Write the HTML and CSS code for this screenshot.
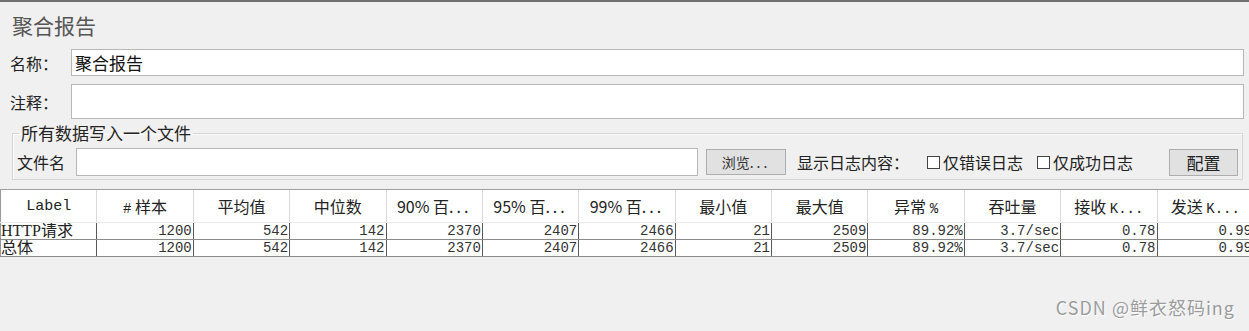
FILE: index.html
```html
<!DOCTYPE html>
<html lang="zh-CN">
<head>
    <meta charset="UTF-8">
    <meta name="viewport" content="width=device-width, initial-scale=1.0">
    <title>聚合报告</title>
    <link rel="stylesheet" href="styles.css">
</head>
<body>

<div class="title">聚合报告</div>

<div class="field-row name-row">
    <label class="field-label">名称：</label>
    <input class="text-input" type="text" value="聚合报告">
</div>
<div class="field-row comment-row">
    <label class="field-label">注释：</label>
    <input class="text-input" type="text" value="">
</div>

<fieldset class="file-box">
    <legend>所有数据写入一个文件</legend>
    <div class="file-row">
        <span class="file-label">文件名</span>
        <input class="file-input" type="text" value="">
        <button class="btn browse-btn">浏览<span class="dots">...</span></button>
        <span class="log-label">显示日志内容：</span>
        <label class="check"><span class="box"></span>仅错误日志</label>
        <label class="check"><span class="box"></span>仅成功日志</label>
        <button class="btn config-btn">配置</button>
    </div>
</fieldset>

<div class="table-wrap">
    <table class="report">
        <thead>
            <tr>
                <th class="mono">Label</th>
                <th><span class="mono">#</span> 样本</th>
                <th>平均值</th>
                <th>中位数</th>
                <th>90% 百<span class="dots">...</span></th>
                <th>95% 百<span class="dots">...</span></th>
                <th>99% 百<span class="dots">...</span></th>
                <th>最小值</th>
                <th>最大值</th>
                <th>异常 <span class="mono">%</span></th>
                <th>吞吐量</th>
                <th>接收 <span class="mono">K...</span></th>
                <th>发送 <span class="mono">K...</span></th>
            </tr>
        </thead>
        <tbody>
            <tr>
                <td class="label-cell">HTTP请求</td>
                <td>1200</td><td>542</td><td>142</td><td>2370</td><td>2407</td><td>2466</td>
                <td>21</td><td>2509</td><td>89.92%</td><td>3.7/sec</td><td>0.78</td><td>0.99</td>
            </tr>
            <tr>
                <td class="label-cell">总体</td>
                <td>1200</td><td>542</td><td>142</td><td>2370</td><td>2407</td><td>2466</td>
                <td>21</td><td>2509</td><td>89.92%</td><td>3.7/sec</td><td>0.78</td><td>0.99</td>
            </tr>
        </tbody>
    </table>
</div>

<div class="watermark">CSDN @鲜衣怒码ing</div>

</body>
</html>
```

FILE: styles.css
```css
body {
    margin: 0;
    height: 329px;
    position: relative;
    overflow: hidden;
    background-color: #f0f0f0;
    border-top: 2px solid #707070;
    font-family: "Noto Sans CJK SC", sans-serif;
    color: #222;
}
.title {
    height: 47px;
    line-height: 47px;
    padding-left: 12px;
    font-size: 21px;
    color: #555;
}
.field-row {
    display: flex;
    align-items: center;
    padding: 0 5px 0 10px;
}
.name-row {
    height: 27px;
}
.comment-row {
    height: 35px;
    margin-top: 8px;
}
.field-label {
    width: 61px;
    font-size: 16px;
}
.text-input {
    flex: 1;
    height: 100%;
    margin: 0;
    padding: 0 3px;
    box-sizing: border-box;
    border: 1px solid #b7b7b7;
    background-color: #fff;
    font-family: "Noto Sans CJK SC", sans-serif;
    font-size: 17px;
    color: #111;
    outline: none;
}
.file-box {
    margin: 4px 6px 0 12px;
    padding: 5px 4px 3px 4px;
    border: 1px solid #d6d6d6;
    box-shadow: inset 1px 1px 0 #fafafa;
}
.file-box legend {
    margin-left: 2px;
    padding: 0 2px;
    font-size: 17px;
    line-height: 20px;
    color: #222;
}
.file-row {
    display: flex;
    align-items: center;
    height: 28px;
}
.file-label {
    width: 50px;
    font-size: 16px;
}
.file-input {
    width: 622px;
    height: 28px;
    margin: 0 0 0 9px;
    padding: 0 3px;
    box-sizing: border-box;
    border: 1px solid #b7b7b7;
    background-color: #fff;
    outline: none;
}
.btn {
    box-sizing: border-box;
    margin: 0;
    padding: 0;
    background-color: #e1e1e1;
    border: 1px solid #adadad;
    font-family: "Noto Sans CJK SC", sans-serif;
    color: #333;
}
.browse-btn {
    width: 80px;
    height: 26px;
    margin-left: 8px;
    font-size: 14px;
}
.dots {
    letter-spacing: 3px;
}
.log-label {
    margin-left: 11px;
    font-size: 16px;
}
.check {
    display: flex;
    align-items: center;
    margin-left: 18px;
    font-size: 16px;
}
.check + .check {
    margin-left: 14px;
}
.box {
    width: 11px;
    height: 11px;
    margin-right: 3px;
    border: 1px solid #444;
    background-color: #fff;
}
.config-btn {
    width: 69px;
    height: 27px;
    margin-left: auto;
    font-size: 17px;
    color: #222;
}
.table-wrap {
    margin-top: 9px;
    overflow: hidden;
    border-top: 1px solid #a0a0a0;
}
.report {
    width: 1254px;
    table-layout: fixed;
    border-collapse: collapse;
    border-left: 1px solid #999;
}
.report th {
    height: 32px;
    padding: 0;
    background-color: #fff;
    border-right: 1px solid #dadada;
    border-bottom: 1px solid #ececec;
    font-weight: normal;
    font-size: 16px;
    color: #222;
    white-space: nowrap;
    overflow: hidden;
}
.mono {
    font-family: "Liberation Mono", monospace;
    font-size: 14px;
}
th.mono {
    font-size: 15px;
}
.report td {
    height: 16px;
    padding: 0 1px;
    line-height: 16px;
    background-color: #fff;
    border-right: 1px solid #5a5a5a;
    border-bottom: 1px solid #8a8a8a;
    text-align: right;
    font-family: "Liberation Mono", monospace;
    font-size: 14px;
    color: #333;
    white-space: nowrap;
    overflow: hidden;
}
.report td.label-cell {
    padding-left: 0;
    text-align: left;
    font-family: "Liberation Serif", "Noto Sans CJK SC", serif;
    font-size: 16px;
    color: #222;
}
.watermark {
    position: absolute;
    right: 14px;
    bottom: 11px;
    font-size: 18px;
    letter-spacing: 1px;
    color: #9c9c9c;
    text-shadow: 1px 1px 1px #fff;
}
```
